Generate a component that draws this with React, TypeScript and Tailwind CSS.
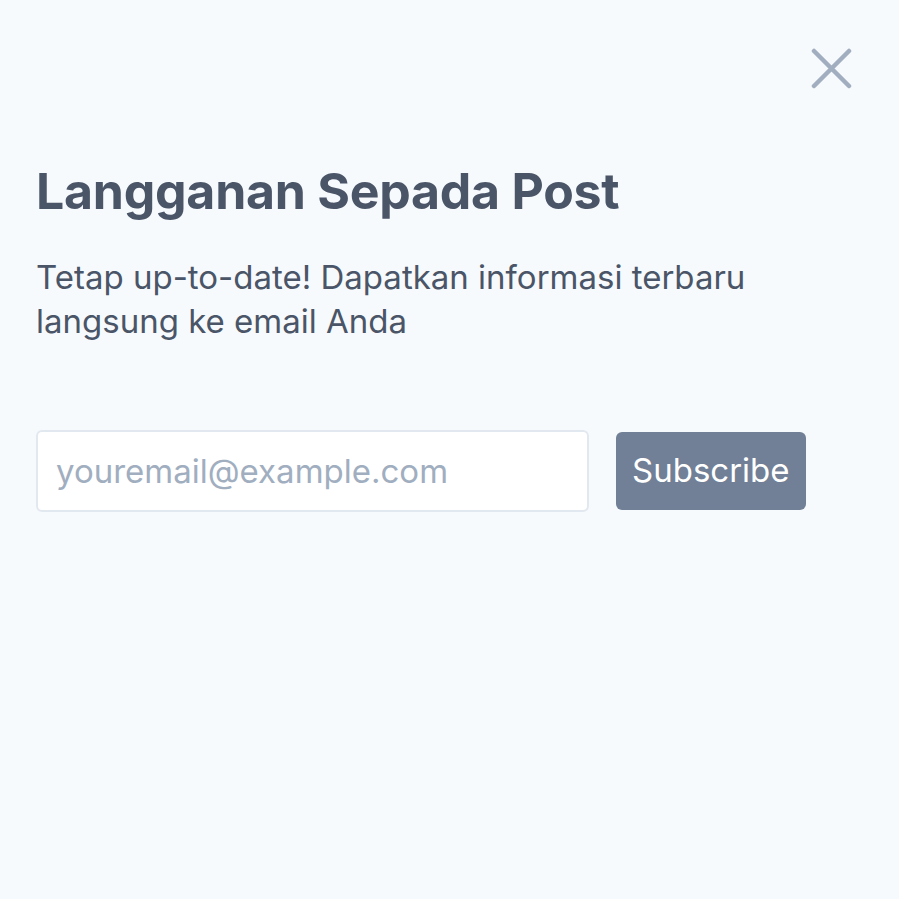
export default function App() {
  return (
    <div className="min-h-[899px] w-full bg-[#f7fafc] font-['Inter',sans-serif] relative">
      <button className="absolute right-[47px] top-[48px] text-[#a0aec0]" aria-label="Close">
        <svg width="41" height="41" viewBox="0 0 41 41" fill="none" stroke="currentColor" strokeWidth="4.5" strokeLinecap="round">
          <path d="M3 3L38 38M38 3L3 38" />
        </svg>
      </button>
      <div className="px-[36px] pt-[161px]">
        <h1 className="text-[50px] leading-[60px] font-bold text-[#4a5568] tracking-[-0.25px]">
          Langganan Sepada Post
        </h1>
        <p className="mt-[34px] text-[33px] leading-[44px] text-[#4a5568] max-w-[780px]">
          Tetap up-to-date! Dapatkan informasi terbaru langsung ke email Anda
        </p>
        <form className="mt-[87px] flex items-center gap-[27px]" onSubmit={(e) => e.preventDefault()}>
          <input
            type="email"
            placeholder="youremail@example.com"
            className="w-[553px] h-[82px] rounded-[6px] border-2 border-[#e2e8f0] bg-white px-[18px] text-[33px] text-[#4a5568] placeholder:text-[#a0aec0] outline-none"
          />
          <button className="h-[78px] px-[16px] rounded-[6px] bg-[#718096] text-white text-[33px]">
            Subscribe
          </button>
        </form>
      </div>
    </div>
  );
}
